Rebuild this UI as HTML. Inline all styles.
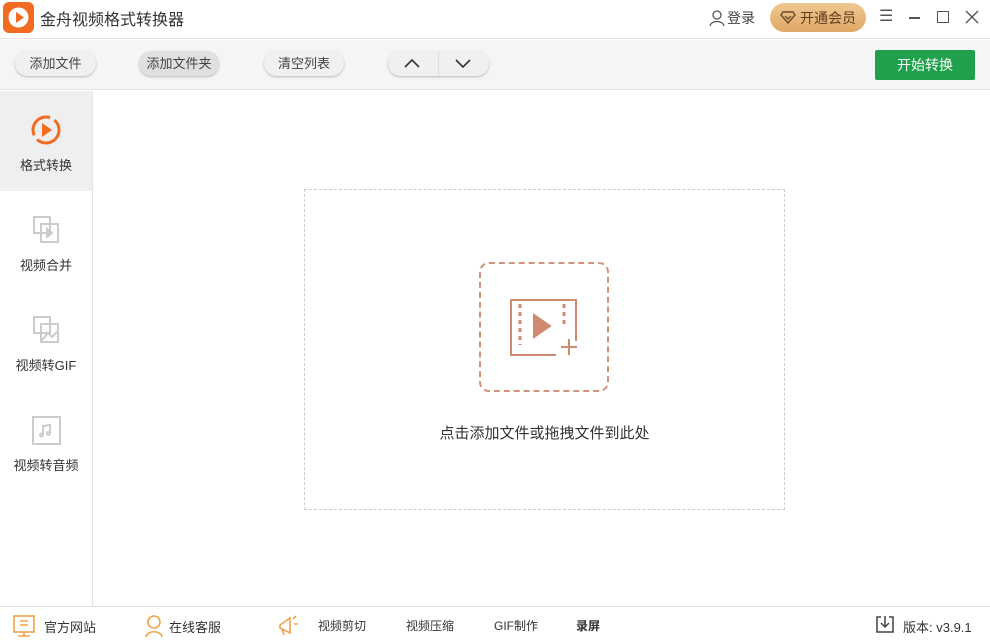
<!DOCTYPE html>
<html><head><meta charset="utf-8"><style>
*{margin:0;padding:0;box-sizing:border-box}
body{width:990px;height:640px;overflow:hidden;background:#fff;font-family:"Liberation Sans","Noto Sans CJK SC",sans-serif;position:relative;color:#333}
.a{position:absolute}
.btn{position:absolute;top:51px;height:25px;border-radius:13px;background:#f0f0f0;box-shadow:0 1px 2px rgba(0,0,0,.25);font-size:13px;color:#444;text-align:center;line-height:25px}
.side{position:absolute;left:0;width:92px;height:100px;text-align:center;font-size:13px;color:#333}
.bt{position:absolute;top:617px;font-size:13px;color:#333}
</style></head><body>
<div class="a" style="left:0;top:0;width:990px;height:39px;background:#fff;border-bottom:1px solid #e3e3e3"></div>
<div class="a" style="left:3px;top:2px;width:31px;height:31px;border-radius:6px;background:#f26b22"></div>
<svg class="a" style="left:3px;top:2px" width="31" height="31"><circle cx="15.5" cy="15.5" r="10" fill="#fff"/><path d="M13 10 L21 15.5 L13 21Z" fill="#f26b22"/></svg>
<div class="a" style="left:40px;top:6px;font-size:16px;color:#333">金舟视频格式转换器</div>
<svg class="a" style="left:708px;top:9px" width="18" height="18" fill="none" stroke="#555" stroke-width="1.3"><circle cx="9" cy="6" r="4"/><path d="M2 17 C3 11 15 11 16 17"/></svg>
<div class="a" style="left:727px;top:8px;font-size:14px;color:#444">登录</div>
<div class="a" style="left:770px;top:3px;width:96px;height:29px;border-radius:15px;background:linear-gradient(#f0c890,#dfa868)"></div>
<svg class="a" style="left:780px;top:9px" width="16" height="16" fill="none" stroke="#6b4a25" stroke-width="1.4"><path d="M3 3H13L15 6L8 14L1 6Z"/><path d="M5 7L8 10L11 7"/></svg>
<div class="a" style="left:800px;top:8px;font-size:14px;color:#5a3d1c">开通会员</div>
<div class="a" style="left:879px;top:6px;font-size:16px;color:#555">☰</div>
<div class="a" style="left:909px;top:17px;width:11px;height:1.5px;background:#555"></div>
<div class="a" style="left:937px;top:11px;width:12px;height:12px;border:1.5px solid #555"></div>
<svg class="a" style="left:965px;top:10px" width="14" height="14" stroke="#555" stroke-width="1.4"><path d="M1 1L13 13M13 1L1 13"/></svg>
<div class="a" style="left:0;top:40px;width:990px;height:50px;background:#f5f5f5;border-bottom:1px solid #e3e3e3"></div>
<div class="btn" style="left:15px;width:81px">添加文件</div>
<div class="btn" style="left:139px;width:80px;background:#e0e0e0">添加文件夹</div>
<div class="btn" style="left:264px;width:80px">清空列表</div>
<div class="btn" style="left:388px;width:101px"></div>
<div class="a" style="left:438px;top:51px;width:1px;height:25px;background:#ddd"></div>
<svg class="a" style="left:403px;top:56px" width="80" height="16" fill="none" stroke="#333" stroke-width="1.6"><path d="M2 11L9 4L16 11"/><path d="M53 4L60 11L67 4"/></svg>
<div class="a" style="left:875px;top:50px;width:100px;height:30px;background:#1ea14a;border-radius:2px;color:#fff;font-size:14px;text-align:center;line-height:30px">开始转换</div>
<div class="a" style="left:92px;top:91px;width:1px;height:515px;background:#e3e3e3"></div>
<div class="side" style="top:91px;background:#efefef">
<svg style="margin-top:22px" width="34" height="34" fill="none"><circle cx="17" cy="17" r="13" stroke="#f26b22" stroke-width="3" stroke-dasharray="30 5"/><path d="M13 10L23 17L13 24Z" fill="#f26b22"/></svg>
<div style="margin-top:5px">格式转换</div></div>
<div class="side" style="top:191px">
<svg style="margin-top:22px" width="34" height="34" fill="none" stroke="#ccc" stroke-width="2"><rect x="5" y="4" width="16" height="16"/><rect x="12" y="11" width="17" height="18"/><path d="M18 16L23 20L18 24Z" fill="#ccc"/></svg>
<div style="margin-top:5px">视频合并</div></div>
<div class="side" style="top:291px">
<svg style="margin-top:22px" width="34" height="34" fill="none" stroke="#ccc" stroke-width="2"><rect x="5" y="4" width="16" height="16"/><rect x="12" y="11" width="17" height="18"/><path d="M13 27L19 20L23 24L29 18"/></svg>
<div style="margin-top:5px">视频转GIF</div></div>
<div class="side" style="top:391px">
<svg style="margin-top:22px" width="34" height="34" fill="none" stroke="#ccc" stroke-width="2"><rect x="4" y="4" width="27" height="27"/><path d="M14 22V13L21 12V20"/><circle cx="12.5" cy="22" r="1.5"/><circle cx="19.5" cy="20.5" r="1.5"/></svg>
<div style="margin-top:5px">视频转音频</div></div>
<div class="a" style="left:304px;top:189px;width:481px;height:321px;border:1.5px dashed #ccc"></div>
<div class="a" style="left:479px;top:262px;width:130px;height:130px;border:2px dashed #d0937a;border-radius:10px"></div>
<svg class="a" style="left:508px;top:297px" width="74" height="62" fill="none" stroke="#d08a70" stroke-width="2"><path d="M48 58H3V3H68V44"/><path d="M12 7V48M56 7V27" stroke-dasharray="4 4" stroke-width="3"/><path d="M26 18L42 29L26 40Z" fill="#d08a70"/><path d="M61 42V58M53 50H69"/></svg>
<div class="a" style="left:304px;top:422px;width:481px;text-align:center;font-size:15px;color:#333">点击添加文件或拖拽文件到此处</div>
<div class="a" style="left:0;top:606px;width:990px;height:1px;background:#e3e3e3"></div>
<svg class="a" style="left:12px;top:614px" width="26" height="24" fill="none" stroke="#f0a24a" stroke-width="1.6"><rect x="2" y="2" width="20" height="16"/><path d="M8 7H16M8 11H16M12 18V22M6 22H18"/></svg>
<div class="bt" style="left:44px">官方网站</div>
<svg class="a" style="left:144px;top:614px" width="20" height="24" fill="none" stroke="#f0a24a" stroke-width="1.6"><circle cx="10" cy="8" r="6"/><path d="M2 23C3 16 17 16 18 23"/></svg>
<div class="bt" style="left:169px">在线客服</div>
<svg class="a" style="left:276px;top:613px" width="24" height="24" fill="none" stroke="#f0a24a" stroke-width="1.6"><path d="M4 12L14 5V20L4 15Z"/><path d="M6 16L8 22M17 6L20 3M18 11H22"/></svg>
<div class="bt" style="left:318px;font-size:12px">视频剪切</div>
<div class="bt" style="left:406px;font-size:12px">视频压缩</div>
<div class="bt" style="left:494px;font-size:12px">GIF制作</div>
<div class="bt" style="left:576px;font-size:12px;font-weight:bold">录屏</div>
<svg class="a" style="left:875px;top:614px" width="20" height="20" fill="none" stroke="#444" stroke-width="1.5"><path d="M6 3H2V18H18V3H14M10 2V13M6 9L10 13L14 9"/></svg>
<div class="bt" style="left:903px">版本: v3.9.1</div>
</body></html>
